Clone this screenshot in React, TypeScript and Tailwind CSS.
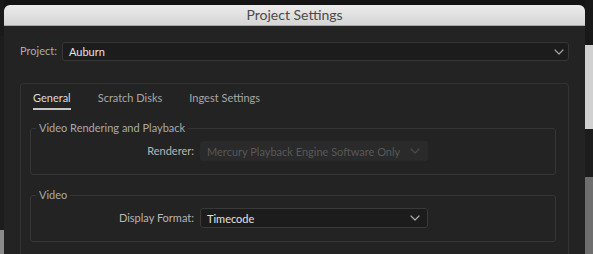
import React from "react";

function Chevron({ className }: { className?: string }) {
  return (
    <svg width="10" height="6" viewBox="0 0 10 6" className={className} fill="none">
      <path d="M1 1l4 4 4-4" stroke="currentColor" strokeWidth="1.2" strokeLinecap="round" strokeLinejoin="round" />
    </svg>
  );
}

function Select({ value, disabled }: { value: string; disabled?: boolean }) {
  return (
    <div
      className={
        disabled
          ? "flex h-[20px] w-[228px] items-center justify-between rounded-[3px] bg-[#2a2a2a] pl-[7px] pr-[8px] text-[#585858]"
          : "flex h-[20px] w-[228px] items-center justify-between rounded-[3px] border border-[#393939] bg-[#1c1c1c] pl-[6px] pr-[7px] text-[#e2e2e2]"
      }
    >
      <span className="whitespace-nowrap text-[11px] leading-none">{value}</span>
      <Chevron className={disabled ? "text-[#4a4a4a]" : "text-[#a8a8a8]"} />
    </div>
  );
}

function Group({ title, label, children }: { title: string; label: string; children: React.ReactNode }) {
  return (
    <fieldset className="rounded-[3px] border border-[#363636] pb-[13px] pt-[6px]">
      <legend className="ml-[5px] px-[3px] text-[11px] leading-[14px] text-[#a9a9a9]">{title}</legend>
      <div className="flex items-center">
        <span className="w-[163px] text-right text-[11px] text-[#b5b5b5]">{label}</span>
        <div className="ml-[6px]">{children}</div>
      </div>
    </fieldset>
  );
}

export default function App() {
  return (
    <div className="flex h-[254px] w-[593px] overflow-hidden bg-[#141414] font-['Lato',sans-serif]">
      {/* left edge of the app behind */}
      <div className="flex w-[4px] flex-col">
        <div className="h-[36px] bg-[#1a1a1a]" />
        <div className="flex-1 bg-[#1d1d1d]" />
        <div className="h-[24px] bg-[#8a8a8a]" />
      </div>

      {/* dialog window */}
      <div className="mt-[5px] flex w-[581px] flex-col overflow-hidden">
        <div className="flex h-[21px] shrink-0 items-center justify-center rounded-t-[6px] border-b border-[#a9a9a9] bg-gradient-to-b from-[#ececec] to-[#d5d5d5]">
          <span className="text-[14px] leading-none text-[#4b4b4b]">Project Settings</span>
        </div>
        <div className="flex flex-1 flex-col bg-[#232323] px-[16px] pt-[16px]">
          <div className="flex items-center">
            <span className="w-[42px] text-[11px] text-[#ababab]">Project:</span>
            <div className="flex h-[19px] flex-1 items-center justify-between rounded-[3px] border border-[#363636] bg-[#1c1c1c] pl-[6px] pr-[4px]">
              <span className="text-[11px] leading-none text-[#e4e4e4]">Auburn</span>
              <Chevron className="text-[#a0a0a0]" />
            </div>
          </div>

          <div className="mt-[22px] flex-1 rounded-t-[4px] border border-b-0 border-[#333333] pl-[9px] pr-[12px]">
            <div className="flex pl-[3px] pt-[6px] text-[11px]">
              <div className="flex flex-col">
                <span className="leading-[16px] text-[#dadada]">General</span>
                <div className="mt-[2px] h-[2px] bg-[#c6c6c6]" />
              </div>
              <span className="ml-[27px] leading-[16px] text-[#a7a7a7]">Scratch Disks</span>
              <span className="ml-[27px] leading-[16px] text-[#a7a7a7]">Ingest Settings</span>
            </div>

            <div className="mt-[11px]">
              <Group title="Video Rendering and Playback" label="Renderer:">
                <Select value="Mercury Playback Engine Software Only" disabled />
              </Group>
            </div>
            <div className="mt-[13px]">
              <Group title="Video" label="Display Format:">
                <Select value="Timecode" />
              </Group>
            </div>
          </div>
        </div>
      </div>

      {/* right edge: photo behind */}
      <div className="flex flex-1 flex-col">
        <div className="h-[45px] bg-[#181818]" />
        <div className="h-[84px] bg-[#d0d0d0]" />
        <div className="h-[48px] bg-[#1c1c1c]" />
        <div className="flex-1 bg-[#6e6e6e]" />
      </div>
    </div>
  );
}
